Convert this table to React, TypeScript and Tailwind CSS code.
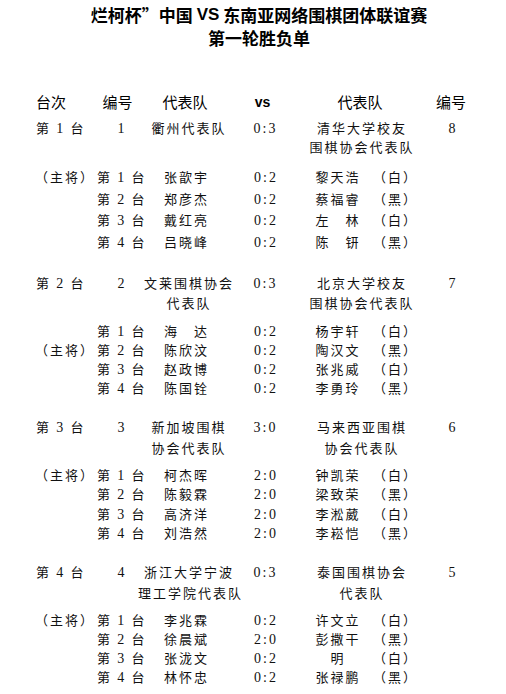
import React from "react";

type Player = [string, string, string, string];
type Section = {
  board: string;
  num: string;
  left: string[];
  score: string;
  right: string[];
  rnum: string;
  captain: number;
  players: Player[];
  gaps: number[];
};

const sections: Section[] = [
  {
    board: "1",
    num: "1",
    left: ["衢州代表队"],
    score: "0:3",
    right: ["清华大学校友", "围棋协会代表队"],
    rnum: "8",
    captain: 0,
    players: [
      ["张歆宇", "0:2", "黎天浩", "（白）"],
      ["郑彦杰", "0:2", "蔡福睿", "（黑）"],
      ["戴红亮", "0:2", "左　林", "（白）"],
      ["吕晓峰", "0:2", "陈　钘", "（黑）"],
    ],
    gaps: [8, 0, 11, 3, 2, 3],
  },
  {
    board: "2",
    num: "2",
    left: ["文莱围棋协会", "代表队"],
    score: "0:3",
    right: ["北京大学校友", "围棋协会代表队"],
    rnum: "7",
    captain: 1,
    players: [
      ["海　达", "0:2", "杨宇轩", "（白）"],
      ["陈欣汶", "0:2", "陶汉文", "（黑）"],
      ["赵政博", "0:2", "张兆威", "（白）"],
      ["陈国铨", "0:2", "李勇玲", "（黑）"],
    ],
    gaps: [22, 1, 9, 0, 0, 0],
  },
  {
    board: "3",
    num: "3",
    left: ["新加坡围棋", "协会代表队"],
    score: "3:0",
    right: ["马来西亚围棋", "协会代表队"],
    rnum: "6",
    captain: 0,
    players: [
      ["柯杰晖", "2:0", "钟凯荣", "（白）"],
      ["陈毅霖", "2:0", "梁致荣", "（黑）"],
      ["高济洋", "2:0", "李淞葳", "（白）"],
      ["刘浩然", "2:0", "李崧恺", "（黑）"],
    ],
    gaps: [20, 2, 8, 0, 1, 0],
  },
  {
    board: "4",
    num: "4",
    left: ["浙江大学宁波", "理工学院代表队"],
    score: "0:3",
    right: ["泰国围棋协会", "代表队"],
    rnum: "5",
    captain: 0,
    players: [
      ["李兆霖", "0:2", "许文立", "（白）"],
      ["徐晨斌", "2:0", "彭撒干", "（黑）"],
      ["张泷文", "0:2", "明", "（白）"],
      ["林怀忠", "0:2", "张禄鹏", "（黑）"],
    ],
    gaps: [20, 2, 8, 0, 0, 0],
  },
];

function Row({ mt, children }: { mt: number; children: React.ReactNode }) {
  return (
    <div className="flex h-[19px] items-center whitespace-nowrap" style={{ marginTop: mt }}>
      {children}
    </div>
  );
}

function Board({ n }: { n: string }) {
  return (
    <>
      第 <span className="text-[14px]">{n}</span> 台
    </>
  );
}

function SectionBlock({ s }: { s: Section }) {
  const rows: React.ReactNode[] = [];
  rows.push(
    <Row key="t1" mt={s.gaps[0]}>
      <div className="w-[106px] pl-[36px]">
        <Board n={s.board} />
      </div>
      <div className="w-[32px] text-center text-[14px]">{s.num}</div>
      <div className="w-[102px] text-center">{s.left[0]}</div>
      <div className="w-[51px] text-center text-[14px]">{s.score}</div>
      <div className="w-[142px] text-center">{s.right[0]}</div>
      <div className="w-[40px] text-center text-[14px]">{s.rnum}</div>
    </Row>
  );
  rows.push(
    <Row key="t2" mt={s.gaps[1]}>
      <div className="w-[106px]" />
      <div className="w-[32px]" />
      <div className="w-[102px] text-center">{s.left[1] ?? ""}</div>
      <div className="w-[51px]" />
      <div className="w-[142px] text-center">{s.right[1] ?? ""}</div>
    </Row>
  );
  s.players.forEach((p, i) => {
    rows.push(
      <Row key={"p" + i} mt={s.gaps[2 + i]}>
        <div className="w-[97px] pl-[35px]">{i === s.captain ? "（主将）" : ""}</div>
        <div className="w-[67px]">
          <Board n={String(i + 1)} />
        </div>
        <div className="w-[90px]">{p[0]}</div>
        <div className="w-[61px] text-[14px]">{p[1]}</div>
        <div className="w-[46px] text-center">{p[2]}</div>
        <div className="w-[12px]" />
        <div>{p[3]}</div>
      </Row>
    );
  });
  return <>{rows}</>;
}

export default function App() {
  return (
    <div className="w-[506px] h-[694px] bg-white text-black overflow-hidden">
      <div className="font-['Noto_Sans_CJK_SC',sans-serif] font-bold text-[17px] pl-[12px] text-center">
        <div className="h-[24px] mt-[2px] flex items-center justify-center leading-none">
          烂柯杯”中国 <span className="font-['Liberation_Sans',sans-serif] mx-[4px]">VS</span> 东南亚网络围棋团体联谊赛
        </div>
        <div className="h-[22px] flex items-center justify-center leading-none">第一轮胜负单</div>
      </div>

      <div className="flex h-[19px] mt-[44px] items-center whitespace-nowrap font-['Noto_Sans_CJK_SC',sans-serif] text-[15px] leading-none">
        <div className="w-[90px] pl-[36px]">台次</div>
        <div className="w-[55px] text-center">编号</div>
        <div className="w-[80px] text-center">代表队</div>
        <div className="w-[75px] text-center font-['Liberation_Sans',sans-serif] font-bold text-[14px]">vs</div>
        <div className="w-[120px] text-center">代表队</div>
        <div className="w-[62px] text-center">编号</div>
      </div>

      <div className="font-['Liberation_Serif','Noto_Sans_CJK_SC',serif] text-[13px] tracking-[2px] leading-none text-[#111]">
        {sections.map((s, i) => (
          <SectionBlock key={i} s={s} />
        ))}
      </div>
    </div>
  );
}
